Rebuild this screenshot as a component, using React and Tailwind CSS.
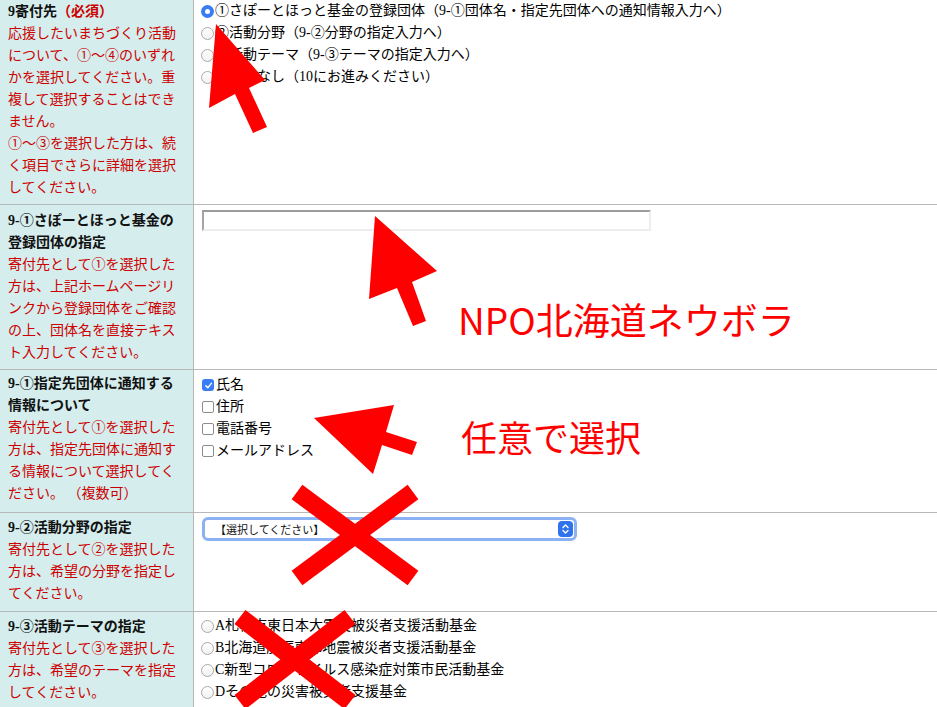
import React from 'react'

const serif = "font-['Liberation_Serif','Noto_Sans_CJK_JP',serif]"

const Radio = ({ checked }) =>
    checked ? (
        <span className="relative inline-flex w-[13px] h-[13px] shrink-0 items-center justify-center rounded-full bg-[#3a7cf5]">
            <span className="block w-[5px] h-[5px] rounded-full bg-white" />
        </span>
    ) : (
        <span className="inline-block w-[13px] h-[13px] shrink-0 rounded-full border border-[#a9a9a9] bg-gradient-to-b from-white to-[#f1f1f1]" />
    )

const Check = ({ checked }) =>
    checked ? (
        <span className="inline-flex w-[12px] h-[12px] shrink-0 items-center justify-center rounded-[3px] bg-[#3a7cf5] mr-[1px]">
            <svg width="9" height="9" viewBox="0 0 10 10">
                <path d="M2 5.3 L4.2 7.5 L8.2 2.6" fill="none" stroke="white" strokeWidth="1.6" strokeLinecap="round" strokeLinejoin="round" />
            </svg>
        </span>
    ) : (
        <span className="inline-block w-[12px] h-[12px] shrink-0 rounded-[2px] border border-[#8d8d8d] bg-white mr-[1px]" />
    )

const Label = ({ title, lines }) => (
    <>
        {title.map((t, i) => (
            <div key={i} className="font-bold text-[#111]">{t}</div>
        ))}
        {lines.map((t, i) => (
            <div key={i} className="text-[#cc0000] whitespace-pre">{t}</div>
        ))}
    </>
)

const Row = ({ h, lpt, rpt, left, children }) => (
    <div className={`grid grid-cols-[194px_1fr] border-b border-[#b8b8b8] ${h}`}>
        <div className={`bg-[#d5eded] border-r border-[#b8b8b8] pl-[8px] ${lpt}`}>{left}</div>
        <div className={`pl-[7px] ${rpt}`}>{children}</div>
    </div>
)

const RadioItem = ({ checked, children }) => (
    <div className="flex items-center h-[22px] whitespace-nowrap">
        <Radio checked={checked} />
        <span className="ml-[1px]">{children}</span>
    </div>
)

const CheckItem = ({ checked, children }) => (
    <div className="flex items-center h-[22px] whitespace-nowrap pl-[1px]">
        <Check checked={checked} />
        <span className="ml-[1px]">{children}</span>
    </div>
)

export default function App() {
    return (
        <div className={`relative w-[937px] h-[707px] overflow-hidden bg-white text-[14px] leading-[22px] ${serif}`}>
            <Row
                h="h-[205px]"
                lpt="pt-[1px]"
                rpt="pt-0"
                left={
                    <>
                        <div className="font-bold text-[#111]">
                            9寄付先<span className="text-[#cc0000]">（必須）</span>
                        </div>
                        <Label
                            title={[]}
                            lines={[
                                '応援したいまちづくり活動',
                                'について、①〜④のいずれ',
                                'かを選択してください。重',
                                '複して選択することはでき',
                                'ません。',
                                '①〜③を選択した方は、続',
                                'く項目でさらに詳細を選択',
                                'してください。'
                            ]}
                        />
                    </>
                }>
                <RadioItem checked>①さぽーとほっと基金の登録団体（9-①団体名・指定先団体への通知情報入力へ）</RadioItem>
                <RadioItem>②活動分野（9-②分野の指定入力へ）</RadioItem>
                <RadioItem>③活動テーマ（9-③テーマの指定入力へ）</RadioItem>
                <RadioItem>④指定なし（10にお進みください）</RadioItem>
            </Row>

            <Row
                h="h-[165px]"
                lpt="pt-[5px]"
                rpt="pt-[5px]"
                left={
                    <Label
                        title={['9-①さぽーとほっと基金の', '登録団体の指定']}
                        lines={[
                            '寄付先として①を選択した',
                            '方は、上記ホームページリ',
                            'ンクから登録団体をご確認',
                            'の上、団体名を直接テキス',
                            'ト入力してください。'
                        ]}
                    />
                }>
                <input
                    type="text"
                    className="block ml-[1px] w-[449px] h-[21px] bg-white border-2 border-t-[#9b9b9b] border-l-[#a5a5a5] border-b-[#ededed] border-r-[#ededed] outline-none"
                />
            </Row>

            <Row
                h="h-[143px]"
                lpt="pt-[3px]"
                rpt="pt-[4px]"
                left={
                    <Label
                        title={['9-①指定先団体に通知する', '情報について']}
                        lines={[
                            '寄付先として①を選択した',
                            '方は、指定先団体に通知す',
                            'る情報について選択してく',
                            'ださい。 （複数可）'
                        ]}
                    />
                }>
                <CheckItem checked>氏名</CheckItem>
                <CheckItem>住所</CheckItem>
                <CheckItem>電話番号</CheckItem>
                <CheckItem>メールアドレス</CheckItem>
            </Row>

            <Row
                h="h-[99px]"
                lpt="pt-[4px]"
                rpt="pt-[4px]"
                left={
                    <Label
                        title={['9-②活動分野の指定']}
                        lines={['寄付先として②を選択した', '方は、希望の分野を指定し', 'てください。']}
                    />
                }>
                <div className="ml-[1px] w-[375px] h-[24px] rounded-[6px] border-[3px] border-[#8cb2f3] bg-white flex items-center justify-between pl-[10px] pr-[1px]">
                    <span className="font-['Noto_Sans_CJK_JP',sans-serif] text-[11px] leading-none text-[#111]">【選択してください】</span>
                    <span className="flex items-center justify-center w-[15px] h-[16px] rounded-[4px] bg-[#3073ee]">
                        <svg width="9" height="12" viewBox="0 0 9 12">
                            <path d="M2 4.5 L4.5 2 L7 4.5 M2 7.5 L4.5 10 L7 7.5" fill="none" stroke="white" strokeWidth="1.4" strokeLinecap="round" strokeLinejoin="round" />
                        </svg>
                    </span>
                </div>
            </Row>

            <Row
                h="h-[120px]"
                lpt="pt-[4px]"
                rpt="pt-[3px]"
                left={
                    <Label
                        title={['9-③活動テーマの指定']}
                        lines={['寄付先として③を選択した', '方は、希望のテーマを指定', 'してください。']}
                    />
                }>
                <RadioItem>A札幌市東日本大震災被災者支援活動基金</RadioItem>
                <RadioItem>B北海道胆振東部地震被災者支援活動基金</RadioItem>
                <RadioItem>C新型コロナウイルス感染症対策市民活動基金</RadioItem>
                <RadioItem>Dその他の災害被災者支援基金</RadioItem>
            </Row>

            {/* annotations */}
            <svg className="absolute inset-0 pointer-events-none" width="937" height="707" viewBox="0 0 937 707">
                <polygon fill="#ff0000" points="216,24 265,80 249,88 267,127 253,133 235,94 209,108" />
                <polygon fill="#ff0000" points="375,216 437,271 412,282 426,321 413,326 397,288 369,299" />
                <polygon fill="#ff0000" points="314,418 394,405 386,432 417,442 412,455 382,445 373,474" />
                <g stroke="#ff0000" strokeWidth="18">
                    <line x1="297" y1="492" x2="413" y2="578" />
                    <line x1="413" y1="492" x2="297" y2="578" />
                    <line x1="240" y1="617" x2="350" y2="702" />
                    <line x1="350" y1="617" x2="240" y2="702" />
                </g>
            </svg>
            <div className="absolute left-[458px] top-[301px] text-[37px] leading-none text-[#ff0000] font-['Noto_Sans_CJK_JP',sans-serif] whitespace-nowrap">
                NPO北海道ネウボラ
            </div>
            <div className="absolute left-[461px] top-[418px] text-[36px] leading-none text-[#ff0000] font-['Noto_Sans_CJK_JP',sans-serif] whitespace-nowrap">
                任意で選択
            </div>
        </div>
    )
}
